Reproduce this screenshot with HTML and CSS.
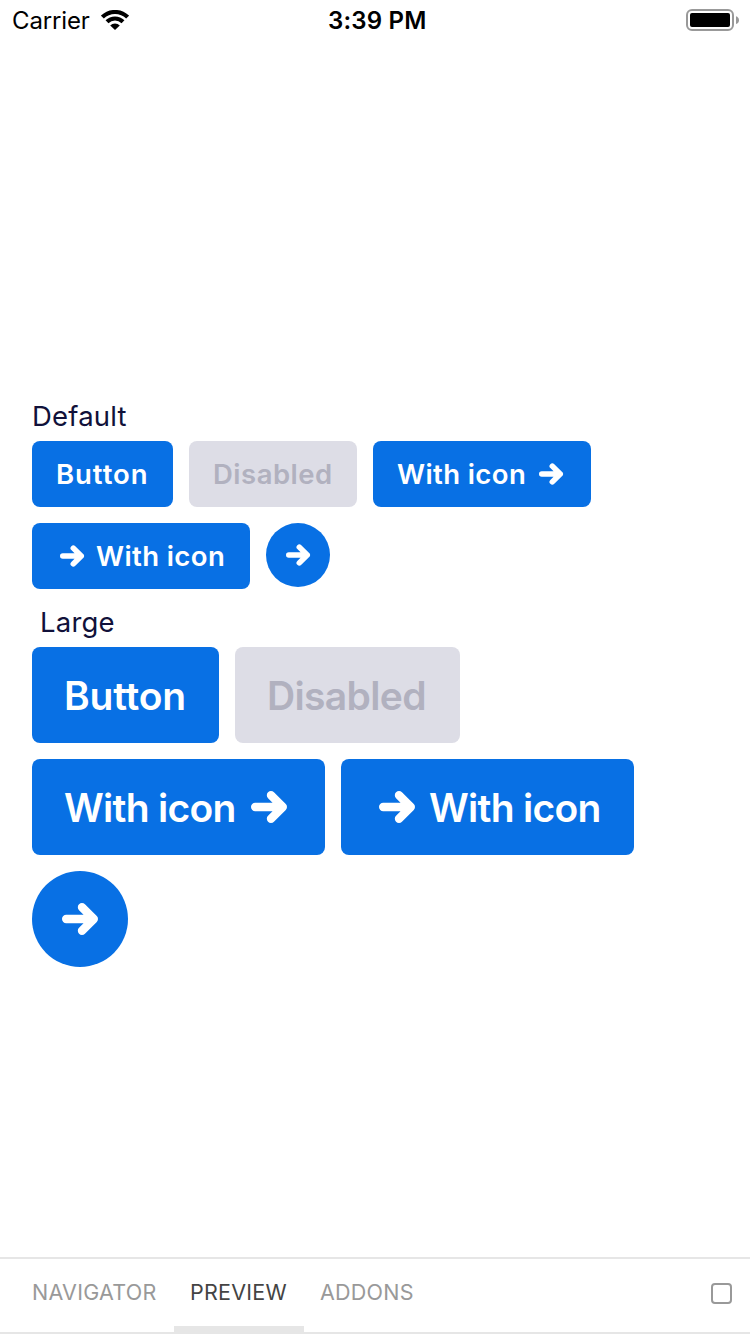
FILE: index.html
```html
<!DOCTYPE html>
<html lang="en">
<head>
<meta charset="utf-8">
<title>Buttons</title>
<link rel="stylesheet" href="styles.css">
</head>
<body>
<svg class="defs" width="0" height="0" aria-hidden="true">
  <symbol id="arrow" viewBox="0 0 24 24"><path d="M5.1 12h13.800M13 6.100l5.900 5.900-5.900 5.900" fill="none" stroke="currentColor" stroke-width="4.200" stroke-linecap="round" stroke-linejoin="round"/></symbol>
</svg>
<div class="screen">
  <header class="status">
    <div class="status-left">
      <span class="carrier">Carrier</span>
      <svg class="wifi" width="28" height="20" viewBox="0 0 28 20">
        <g fill="none" stroke="#000" stroke-width="4.1">
          <path d="M1.4 7.1A18 18 0 0 1 26.6 7.1"/>
          <path d="M6 11.8A11.4 11.4 0 0 1 22 11.8"/>
        </g>
        <path d="M14 20L9.200 15.500A6.500 6.500 0 0 1 18.800 15.500Z"/>
      </svg>
    </div>
    <span class="time">3:39 PM</span>
    <svg class="battery" width="54" height="24" viewBox="0 0 54 24">
      <rect x="1" y="2" width="46" height="20" rx="5" fill="none" stroke="#999" stroke-width="2"/>
      <rect x="4" y="5" width="40" height="14" rx="2"/>
      <path d="M50 8.3c1.8.6 3 2 3 3.900s-1.200 3.300-3 3.900z" fill="#999"/>
    </svg>
  </header>

  <main class="story">
    <p class="label">Default</p>
    <div class="row">
      <button class="btn w-button"><span>Button</span></button>
      <button class="btn w-disabled disabled" disabled><span>Disabled</span></button>
      <button class="btn w-icon"><span>With icon</span><svg class="icon"><use href="#arrow"/></svg></button>
      <button class="btn w-icon"><svg class="icon"><use href="#arrow"/></svg><span>With icon</span></button>
      <button class="btn round" aria-label="Next"><svg class="icon"><use href="#arrow"/></svg></button>
    </div>
    <p class="label indented">Large</p>
    <div class="row large">
      <button class="btn w-button"><span>Button</span></button>
      <button class="btn w-disabled disabled" disabled><span>Disabled</span></button>
      <button class="btn w-icon"><span>With icon</span><svg class="icon"><use href="#arrow"/></svg></button>
      <button class="btn w-icon"><svg class="icon"><use href="#arrow"/></svg><span>With icon</span></button>
      <button class="btn round" aria-label="Next"><svg class="icon"><use href="#arrow"/></svg></button>
    </div>
  </main>

  <nav class="tabs">
    <span class="tab navigator">NAVIGATOR</span>
    <span class="tab preview active">PREVIEW</span>
    <span class="tab addons">ADDONS</span>
    <span class="toggle"></span>
  </nav>
</div>
</body>
</html>
```

FILE: styles.css
```css
* { box-sizing: border-box; }
body { margin: 0; background: #fff; font-family: Inter, "Liberation Sans", sans-serif; }
.defs { position: absolute; }
.screen { width: 750px; height: 1334px; display: flex; flex-direction: column; }

.status {
  height: 40px;
  display: grid;
  grid-template-columns: 328px 1fr 64px;
  color: #000;
}
.status-left { display: flex; padding-left: 12px; }
.carrier { width: 89px; font-size: 24px; line-height: 42px; letter-spacing: -0.15px; }
.wifi { margin-top: 10px; }
.time { font-size: 24px; line-height: 42px; font-weight: 600; letter-spacing: 0.2px; white-space: nowrap; }
.battery { margin-top: 8px; }

.story { flex: 1; padding: 360px 100px 0 32px; }
.label { margin: 0; height: 41px; font-size: 27.5px; line-height: 32px; letter-spacing: 0.2px; color: #11113a; }
.label.indented { margin-top: 16px; height: 42px; padding-top: 1px; padding-left: 8px; }
.row { display: flex; flex-wrap: wrap; align-items: flex-start; gap: 16px; }

.btn {
  height: 66px;
  padding: 0 24px;
  border: 0;
  border-radius: 8px;
  display: flex;
  align-items: center;
  gap: 8px;
  background: #0870e4;
  color: #fff;
  font-family: inherit;
  font-size: 27.5px;
  font-weight: 600;
  white-space: nowrap;
}
.btn.w-button { width: 141px; letter-spacing: 0.95px; }
.btn.w-disabled { width: 168px; letter-spacing: 0.5px; }
.btn.w-icon { width: 218px; letter-spacing: 0.4px; }
.btn.w-icon span { width: 130px; }
.btn.disabled { background: #dddde6; color: #b1b1bf; }
.btn.round { width: 64px; height: 64px; padding: 0; border-radius: 50%; justify-content: center; }
.btn span { text-align: left; }
.icon { width: 32px; height: 32px; flex: none; }

.large .btn { height: 96px; padding: 0 32px; font-size: 39px; }
.large .btn.w-button { width: 187px; letter-spacing: -0.2px; }
.large .btn.w-disabled { width: 225px; letter-spacing: -0.65px; }
.large .btn.w-icon { width: 293px; letter-spacing: -0.7px; }
.large .btn.w-icon span { width: 173px; }
.large .btn.round { width: 96px; padding: 0; }
.large .round { height: 96px; }
.large .icon { width: 48px; height: 48px; }

.tabs {
  height: 77px;
  display: flex;
  border-top: 2px solid #e6e6e6;
  border-bottom: 2px solid #e6e6e6;
  padding: 0 18px 0 16px;
}
.tab { height: 73px; padding-left: 16px; font-size: 21.5px; line-height: 66px; letter-spacing: 0.25px; color: #999; }
.navigator { width: 158px; }
.preview { width: 130px; }
.tab.active { color: #444; border-bottom: 6px solid #e6e6e6; }
.toggle { width: 21px; height: 21px; margin: 24px 0 0 auto; border: 2px solid #999; border-radius: 4px; }
```
